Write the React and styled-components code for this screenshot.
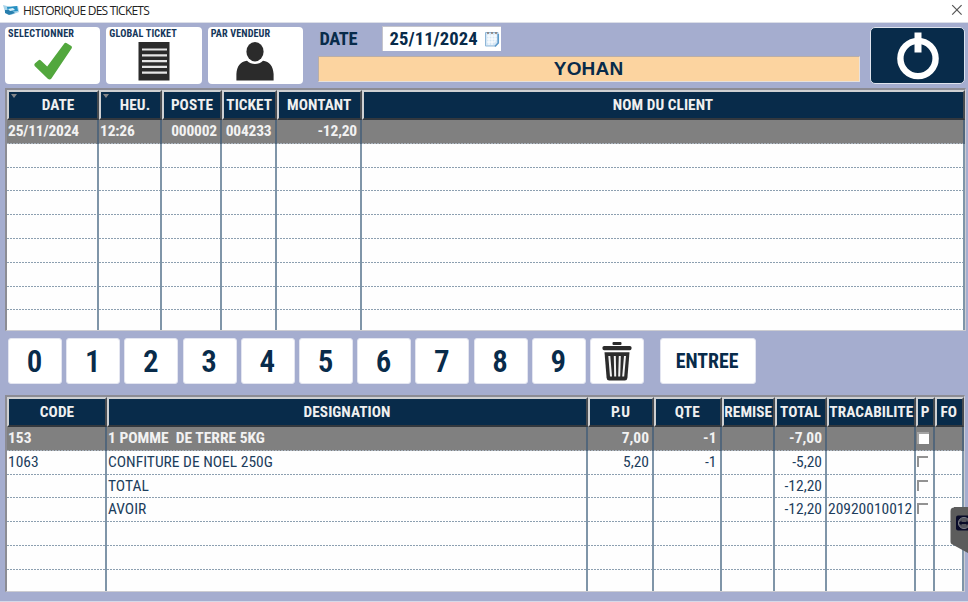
import React from "react";
import styled, { createGlobalStyle, css } from "styled-components";

const navy = "#082b4a";
const lavender = "#a5adcf";
const rule = "#7f95a8";

const GlobalStyle = createGlobalStyle`
  * { box-sizing: border-box; }
  body {
    margin: 0;
    background: ${lavender};
    font-family: "Roboto Condensed", Roboto, sans-serif;
    color: ${navy};
  }
  button { font: inherit; color: inherit; padding: 0; border: 0; }
  svg { flex: none; }
`;

const Window = styled.div`
  width: 968px;
  height: 602px;
  display: flex;
  flex-direction: column;
  overflow: hidden;
  position: relative;
  background: ${lavender};
  border-bottom: 1px solid #d5d9e8;
`;

const TitleBar = styled.header`
  height: 23px;
  flex: none;
  display: flex;
  align-items: center;
  justify-content: space-between;
  padding: 0 5px 2px 3px;
  background: #fff;
  border-bottom: 1px solid #dcdfe8;
`;

const TitleGroup = styled.div`
  display: flex;
  align-items: center;
  gap: 4px;
  font: 12px "Open Sans", sans-serif;
  letter-spacing: -0.78px;
  color: #222;
`;

const CloseButton = styled.button`
  display: flex;
  background: none;
`;

const Toolbar = styled.div`
  height: 65px;
  flex: none;
  display: flex;
  padding: 4px 3px 0 5px;
`;

const ToolButton = styled.button`
  width: 95.5px;
  height: 57px;
  margin-right: 6px;
  display: flex;
  flex-direction: column;
  align-items: stretch;
  background: #fff;
  border-radius: 4px;
`;

const ToolLabel = styled.span`
  padding-left: 3px;
  height: 15px;
  line-height: 14px;
  text-align: left;
  white-space: nowrap;
  font-size: 10.2px;
  font-weight: 700;
  color: #14365a;
  letter-spacing: ${(p) => p.$track || 0}px;
`;

const ToolIcon = styled.span`
  height: 40px;
  display: flex;
  justify-content: center;
`;

const Filters = styled.div`
  width: 543px;
  margin-left: 8.5px;
  display: flex;
  flex-direction: column;
`;

const DateLine = styled.div`
  display: flex;
  height: 29px;
`;

const DateLabel = styled.label`
  width: 64px;
  padding-left: 2px;
  font-size: 18.4px;
  line-height: 23px;
  font-weight: 700;
  letter-spacing: -0.4px;
`;

const DateField = styled.div`
  width: 119px;
  height: 25px;
  margin-top: -1px;
  display: flex;
  align-items: center;
  padding-left: 7px;
  gap: 6px;
  background: #fff;
  border-top: 1px solid #c4c4cc;
  border-left: 1px solid #c4c4cc;
  font-size: 18.6px;
  line-height: 23px;
  font-weight: 700;
  letter-spacing: 0.06px;
  white-space: nowrap;
`;

const SellerField = styled.div`
  height: 26px;
  background: #fcd4a0;
  border: 1px solid #e9e2dc;
  border-top-color: #b9aea8;
  border-left-color: #b9aea8;
  text-align: center;
  font: bold 19px/24px "Liberation Sans", Arial, sans-serif;
  letter-spacing: 0.2px;
`;

const PowerButton = styled.button`
  width: 95px;
  height: 57px;
  margin-left: 10.5px;
  display: flex;
  justify-content: center;
  padding-top: 3px;
  background: ${navy};
  border: 1px solid #dfe4ee;
  border-radius: 5px;
`;

const Table = styled.section`
  width: ${(p) => p.$width}px;
  height: ${(p) => p.$height}px;
  flex: none;
  margin-left: 5px;
  display: flex;
  flex-direction: column;
  overflow: hidden;
  background: #fefefe;
  border: 1px solid #cdcdd2;
  border-top: 2px solid #8c8c94;
  border-left: 2px solid #8c8c94;
`;

const rowGrid = css`
  display: grid;
  grid-template-columns: ${(p) => p.$columns};
`;

const HeaderRow = styled.div`
  ${rowGrid}
  height: 30px;
  flex: none;
`;

const HeaderCell = styled.div`
  position: relative;
  display: flex;
  align-items: center;
  justify-content: center;
  padding-left: ${(p) => p.$shift || 0}px;
  padding-right: ${(p) => p.$trim ?? 1}px;
  background: ${navy};
  border-top: 2px solid #cfd0d2;
  border-left: 2px solid #cfd0d2;
  border-right: 2px solid #474b50;
  border-bottom: 2px solid #33383e;
  color: #f0f0f0;
  font-size: 15.3px;
  font-weight: 700;
  letter-spacing: 0.05px;
  white-space: nowrap;
`;

const SortMark = styled.i`
  position: absolute;
  left: 2px;
  top: 2px;
  border: 3.5px solid transparent;
  border-top: 4px solid #85878a;
  border-bottom: 0;
`;

const BodyRow = styled.div`
  ${rowGrid}
  height: 23.8px;
  flex: none;
  color: ${(p) => (p.$selected ? "#f2f2f2" : "#1c3d5c")};
  font-weight: ${(p) => (p.$selected ? 700 : 400)};
  background: ${(p) => (p.$selected ? "#808080" : "transparent")};
`;

const Cell = styled.div`
  display: flex;
  justify-content: ${(p) => (p.$right ? "flex-end" : "flex-start")};
  padding: 0 3px 0 1px;
  border-right: 2px solid ${(p) => (p.$selected ? "#52667a" : rule)};
  background: linear-gradient(to right, ${(p) => (p.$selected ? "#a9b3bd" : "#8c9fb0")} 65%, transparent 65%) 0 100% / 3px 1px repeat-x;
  font-size: 15.5px;
  line-height: 23px;
  letter-spacing: ${(p) => p.$track || 0}px;
  white-space: pre;
`;

const CheckMark = styled.span`
  width: 11px;
  height: 11px;
  margin: 5px 0 0 0;
  border-top: 2px solid #929292;
  border-left: 2px solid #929292;
  ${(p) => p.$filled && css`
    width: 12px;
    height: 12px;
    background: #fff;
    border-color: #a4a4a4 #fff #fff #a4a4a4;
  `}
`;

const Keypad = styled.div`
  height: 64px;
  flex: none;
  display: flex;
  gap: 4.2px;
  padding: 7px 0 0 8px;
`;

const Key = styled.button`
  width: ${(p) => p.$width || 54}px;
  height: 46px;
  margin-left: ${(p) => p.$gap || 0}px;
  display: flex;
  align-items: center;
  justify-content: center;
  padding: ${(p) => (p.$icon ? "2px 0 0 1px" : "1px 1px 0 0")};
  background: #fff;
  border: 1px solid #e3e5f0;
  border-radius: 3px;
  font-size: ${(p) => (p.$small ? 19.8 : 31)}px;
  font-weight: ${(p) => (p.$small ? 700 : 650)};
`;

const RemoteTab = styled.aside`
  position: absolute;
  right: 0;
  top: 507px;
  width: 18px;
  height: 47px;
  display: flex;
`;

const AppIcon = () => (
  <svg width="16" height="12" viewBox="0 0 16 12">
    <path d="M0 1 8 3 15 2 16 8 8 11 2 8Z" fill="#a9d4ea" />
    <path d="M4 3 14 2 15 7 5 8Z" fill="#2790c2" />
    <path d="M2 6 8 6 12 9 6 11 2 9Z" fill="#287fae" />
    <path d="M5 5 10 4 12 6 7 7Z" fill="#d9f0fa" />
  </svg>
);

const CloseIcon = () => (
  <svg width="12" height="12" viewBox="0 0 12 12" stroke="#555" strokeWidth="1.2">
    <path d="M1.2 1.2 10.6 10.6M10.6 1.2 1.2 10.6" />
  </svg>
);

const CheckIcon = () => (
  <svg width="40" height="40" viewBox="0 0 40 40">
    <path d="M1.8 21.6 5.6 18.2Q6.6 17.4 7.6 18.3L14.2 24.6 31.3 1.4Q32.2.2 33.4 1L38.3 4Q39.5 4.9 38.7 6.2L18.4 36.6Q16.8 38.4 14.8 36.8L1.7 24Q.8 22.8 1.8 21.6Z" fill="#52a73d" />
  </svg>
);

const ListIcon = () => (
  <svg width="32" height="40" viewBox="0 0 32 40">
    <rect x=".5" y="0" width="31" height="38.5" fill="#2b2b2b" />
    <path d="M4 7.5h25M4 13.3h25M4 19.1h25M4 24.9h25M4 30.7h25" stroke="#e6e6e6" strokeWidth="2.2" />
  </svg>
);

const PersonIcon = () => (
  <svg width="38" height="40" viewBox="0 0 38 40" fill="#2b2b2b">
    <ellipse cx="19" cy="9.7" rx="8.6" ry="9.7" />
    <path d="M.4 38.5V32C.8 24 4.5 19.4 11 18.7 15.5 23 22.5 23 27 18.7 33.5 19.4 37.2 24 37.6 32V38.5Z" />
  </svg>
);

const CalendarIcon = () => (
  <svg width="16" height="18" viewBox="0 0 16 18">
    <path d="M1.5 2.5h12.5v10l-3 3.5H1.5Z" fill="#d5e7f6" stroke="#8fb7d8" />
    <path d="M14.3 4v9l-3.3 3.4" fill="none" stroke="#5d9aca" strokeWidth="1.5" />
    <path d="M3 6h10M3 9h10M3 12h8M5 4v11M8 4v11M11 4v8" stroke="#fff" />
    <path d="M3 3h2M7 3h2M11 3h2" stroke="#8a7a70" strokeWidth="1.5" />
  </svg>
);

const PowerIcon = () => (
  <svg width="44" height="50" viewBox="0 0 44 50" fill="none" stroke="#fff">
    <circle cx="22" cy="27.5" r="17.6" strokeWidth="6.4" />
    <path d="M22 1.5V21.5" strokeWidth="7" />
  </svg>
);

const TrashIcon = () => (
  <svg width="30" height="40" viewBox="0 0 30 40">
    <rect x="10.5" y="0" width="9" height="3" rx="1" fill="#2b2b2b" />
    <rect x=".5" y="4" width="29" height="4.2" rx="1.6" fill="#2b2b2b" />
    <path d="M2.5 10.2h25L25.4 36Q25.1 38.5 22.8 38.5H7.2Q4.9 38.5 4.6 36Z" fill="#2b2b2b" />
    <path d="M7.3 14 9 34.5M12.8 14 13.2 34.5M17.8 14 17.2 34.5M23 14 21.2 34.5" stroke="#f2f2f2" strokeWidth="2" />
  </svg>
);

const RemoteIcon = () => (
  <svg width="18" height="47" viewBox="0 0 18 47">
    <path d="M4 0H18V46L1.5 37Q.5 36 .5 34.5V4Q.5.5 4 .5Z" fill="#5c5c5c" />
    <rect x="6" y="8.5" width="16" height="15" rx="2" fill="#080a28" />
    <circle cx="14" cy="16" r="5.6" fill="#55565e" stroke="#777985" />
    <path d="M8.8 16 11.5 13.6V15.1H16.5V13.6L19 16 16.5 18.4V16.9H11.5V18.4Z" fill="#080a28" />
  </svg>
);

const ticketColumns = "92px 63px 60px 54.5px 85.5px 1fr";
const ticketHeaders = [
  { label: "DATE", sort: true, shift: 11 },
  { label: "HEU.", sort: true, shift: 10 },
  { label: "POSTE", trim: 0 },
  { label: "TICKET", trim: 0 },
  { label: "MONTANT", trim: 0 },
  { label: "NOM DU CLIENT" },
];
const ticketRows = [["25/11/2024", "12:26", "000002", "004233", "-12,20", ""]];
while (ticketRows.length < 9) ticketRows.push(["", "", "", "", "", ""]);

const lineColumns = "100px 481px 66px 67.5px 53.5px 52px 88.5px 19px 1fr";
const lineHeaders = [
  { label: "CODE", trim: 0 },
  { label: "DESIGNATION" },
  { label: "P.U" },
  { label: "QTE" },
  { label: "REMISE", trim: 0 },
  { label: "TOTAL" },
  { label: "TRACABILITE", trim: 0 },
  { label: "P", trim: 0 },
  { label: "FO" },
];
const lineRows = [
  ["153", "1 POMME  DE TERRE 5KG", "7,00", "-1", "", "-7,00", "", "on", ""],
  ["1063", "CONFITURE DE NOEL 250G", "5,20", "-1", "", "-5,20", "", "off", ""],
  ["", "TOTAL", "", "", "", "-12,20", "", "off", ""],
  ["", "AVOIR", "", "", "", "-12,20", "20920010012", "off", ""],
];
while (lineRows.length < 7) lineRows.push(Array(9).fill(""));

function Grid({ width, height, columns, headers, rows, rightAligned, checkColumn, tracking }) {
  return (
    <Table $width={width} $height={height}>
      <HeaderRow $columns={columns}>
        {headers.map((h) => (
          <HeaderCell key={h.label} $shift={h.shift} $trim={h.trim}>
            {h.sort && <SortMark />}
            {h.label}
          </HeaderCell>
        ))}
      </HeaderRow>
      {rows.map((row, r) => (
        <BodyRow key={r} $columns={columns} $selected={r === 0}>
          {row.map((value, c) => (
            <Cell
              key={c}
              $selected={r === 0}
              $right={rightAligned.includes(c)}
              $track={r === 0 ? tracking : 0}
            >
              {c === checkColumn ? value && <CheckMark $filled={value === "on"} /> : value}
            </Cell>
          ))}
        </BodyRow>
      ))}
    </Table>
  );
}

export default function App() {
  return (
    <Window>
      <GlobalStyle />
      <TitleBar>
        <TitleGroup>
          <AppIcon />
          HISTORIQUE DES TICKETS
        </TitleGroup>
        <CloseButton aria-label="Fermer"><CloseIcon /></CloseButton>
      </TitleBar>
      <Toolbar>
        <ToolButton>
          <ToolLabel $track={0.22}>SELECTIONNER</ToolLabel>
          <ToolIcon><CheckIcon /></ToolIcon>
        </ToolButton>
        <ToolButton>
          <ToolLabel $track={0.15}>GLOBAL TICKET</ToolLabel>
          <ToolIcon><ListIcon /></ToolIcon>
        </ToolButton>
        <ToolButton>
          <ToolLabel $track={0.12}>PAR VENDEUR</ToolLabel>
          <ToolIcon><PersonIcon /></ToolIcon>
        </ToolButton>
        <Filters>
          <DateLine>
            <DateLabel>DATE</DateLabel>
            <DateField>25/11/2024<CalendarIcon /></DateField>
          </DateLine>
          <SellerField>YOHAN</SellerField>
        </Filters>
        <PowerButton aria-label="Quitter"><PowerIcon /></PowerButton>
      </Toolbar>
      <Grid
        width={961}
        height={243}
        columns={ticketColumns}
        headers={ticketHeaders}
        rows={ticketRows}
        rightAligned={[2, 3, 4]}
        tracking={-0.2}
      />
      <Keypad>
        {[0, 1, 2, 3, 4, 5, 6, 7, 8, 9].map((n) => <Key key={n}>{n}</Key>)}
        <Key $icon aria-label="Effacer"><TrashIcon /></Key>
        <Key $small $width={96} $gap={11.5}>ENTREE</Key>
      </Keypad>
      <Grid
        width={960}
        height={197}
        columns={lineColumns}
        headers={lineHeaders}
        rows={lineRows}
        rightAligned={[2, 3, 4, 5]}
        checkColumn={7}
        tracking={0}
      />
      <RemoteTab><RemoteIcon /></RemoteTab>
    </Window>
  );
}
